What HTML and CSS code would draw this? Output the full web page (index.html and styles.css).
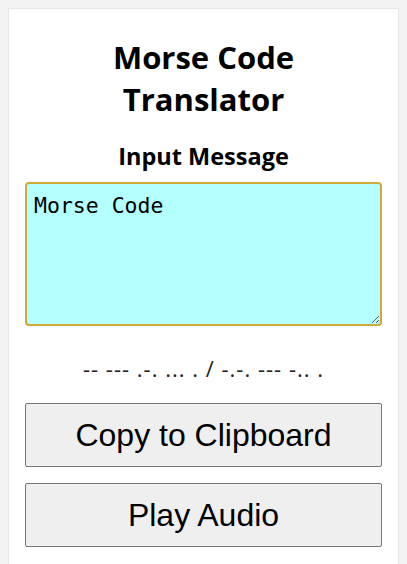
FILE: index.html
```html
<!DOCTYPE html>
<html lang="en">
<head>
<meta charset="utf-8">
<title>Morse Code Translator</title>
<link rel="stylesheet" href="styles.css">
</head>
<body>
<main class="card">
  <h1 class="title">Morse Code Translator</h1>
  <label class="label" for="msg">Input Message</label>
  <textarea id="msg" class="input" autofocus>Morse Code</textarea>
  <p class="output">-- --- .-. ... . / -.-. --- -.. .</p>
  <div class="actions">
    <button class="btn" type="button">Copy to Clipboard</button>
    <button class="btn" type="button">Play Audio</button>
  </div>
</main>
<script src="app.js"></script>
</body>
</html>
```
FILE: styles.css
```css
html, body {
  background: #f3f3f3;
}
body {
  margin: 8px;
  font-family: "Open Sans", "Noto Sans", sans-serif;
  color: #000;
}
.card {
  background: #fff;
  border: 1px solid #e6e6e6;
  padding: 0 16px 40px 16px;
  display: flex;
  flex-direction: column;
}
.title {
  font-size: 31px;
  line-height: 42px;
  font-weight: 700;
  text-align: center;
  margin: 27px 0 20px;
  padding: 0 30px;
}
.label {
  display: block;
  font-size: 23.5px;
  line-height: 32px;
  font-weight: 700;
  text-align: center;
  margin: 0 0 10px;
}
.input {
  display: block;
  box-sizing: border-box;
  width: 100%;
  height: 144px;
  margin: 0;
  padding: 9px 7px;
  border: 2px solid #d2a83c;
  border-radius: 4px;
  background: #b4ffff;
  font-family: "DejaVu Sans Mono", monospace;
  font-size: 21.5px;
  outline: none;
  resize: vertical;
  color: #000;
  caret-color: #000;
}
.output {
  margin: 26px 0 0;
  font-size: 22px;
  line-height: 32px;
  text-align: center;
  color: #222;
  letter-spacing: 1px;
}
.actions {
  display: flex;
  flex-direction: column;
  gap: 16px;
  margin-top: 19px;
}
.btn {
  height: 64px;
  box-sizing: border-box;
  width: 100%;
  margin: 0;
  background: #efefef;
  border: 1px solid #767676;
  border-radius: 2px;
  font-family: "Liberation Sans", Arial, sans-serif;
  font-size: 32px;
  color: #000;
}
```
FILE: app.js
```js
var t = document.getElementById('msg');
t.focus();
t.setSelectionRange(t.value.length, t.value.length);
```
